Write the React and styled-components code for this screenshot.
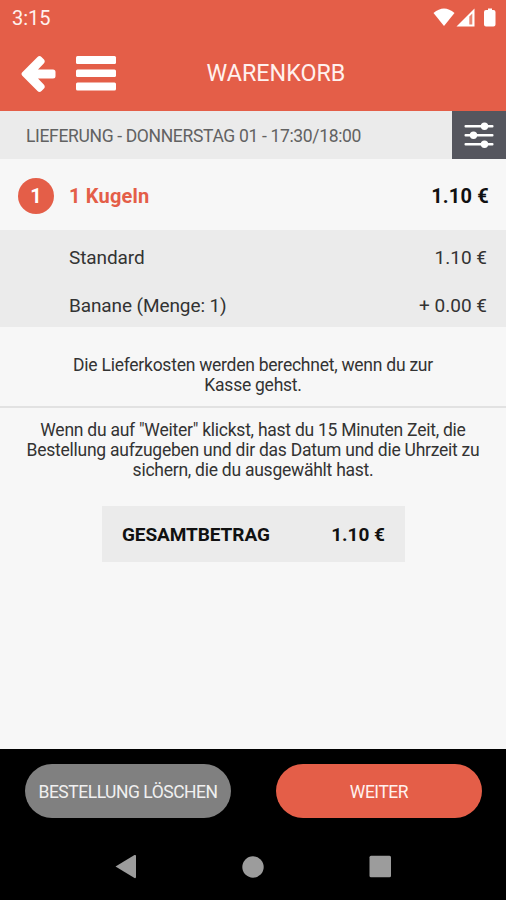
import React from "react";
import styled, { ThemeProvider, createGlobalStyle } from "styled-components";

const theme = {
  colorPrimary: "#e45e48",
  colorDark: "#55565e",
  background: "#f7f7f7",
  panel: "#ebebeb",
  textColor: "#333333",
  textStrong: "#111111",
};

const GlobalStyle = createGlobalStyle`
  body {
    margin: 0;
    font-family: Roboto, "Liberation Sans", sans-serif;
    color: ${({ theme }) => theme.textColor};
    background-color: #000;
  }
`;

const Screen = styled.div`
  width: 506px;
  height: 900px;
  display: flex;
  flex-direction: column;
  overflow: hidden;
  white-space: nowrap;
  background-color: ${({ theme }) => theme.background};
`;

const StatusBar = styled.div`
  height: 36px;
  flex: none;
  display: flex;
  align-items: center;
  justify-content: space-between;
  padding: 0 9px 0 12px;
  box-sizing: border-box;
  color: #fff;
  background-color: ${({ theme }) => theme.colorPrimary};
`;

const Clock = styled.span`
  font-size: 20px;
  color: #fff1ee;
`;

const Header = styled.header`
  height: 75px;
  flex: none;
  display: grid;
  grid-template-columns: 116px 1fr 70px;
  align-items: center;
  color: #fff;
  background-color: ${({ theme }) => theme.colorPrimary};
`;

const HeaderIcons = styled.div`
  display: flex;
  align-items: center;
  gap: 20px;
  padding-left: 21px;

  svg {
    flex: none;
  }
`;

const Title = styled.h1`
  margin: 0;
  padding-bottom: 1px;
  font-size: 23.3px;
  font-weight: 400;
  text-align: center;
  color: #fff1ee;
`;

const DeliveryBar = styled.div`
  height: 48px;
  flex: none;
  display: flex;
  align-items: stretch;
  justify-content: space-between;
  background-color: ${({ theme }) => theme.panel};
`;

const DeliverySlot = styled.span`
  align-self: center;
  padding: 2px 0 0 26px;
  font-size: 17.5px;
  letter-spacing: -0.34px;
  color: #626262;
`;

const FilterButton = styled.button`
  width: 54px;
  padding: 0;
  border: 0;
  display: flex;
  align-items: center;
  justify-content: center;
  background-color: ${({ theme }) => theme.colorDark};
`;

const ItemRow = styled.div`
  height: 71px;
  flex: none;
  display: flex;
  align-items: center;
  padding: 2px 17px 0 18px;
  box-sizing: border-box;
  font-size: 20px;
  font-weight: 700;
`;

const Quantity = styled.span`
  width: 36px;
  height: 36px;
  margin-right: 15px;
  border-radius: 50%;
  display: flex;
  align-items: center;
  justify-content: center;
  color: #fff;
  background-color: ${({ theme }) => theme.colorPrimary};
`;

const ItemName = styled.span`
  flex: 1;
  letter-spacing: 0.2px;
  color: ${({ theme }) => theme.colorPrimary};
`;

const Price = styled.span`
  letter-spacing: ${({ $spacing }) => $spacing || 0}px;
  color: ${({ $strong, theme }) => ($strong ? theme.textStrong : theme.textColor)};
`;

const Options = styled.div`
  height: 97px;
  flex: none;
  padding: 3px 19px 0 69px;
  box-sizing: border-box;
  background-color: ${({ theme }) => theme.panel};
`;

const OptionRow = styled.div`
  height: 48px;
  display: flex;
  align-items: center;
  justify-content: space-between;
  font-size: 19px;
  letter-spacing: -0.1px;
`;

const Note = styled.p`
  margin: 0;
  padding: ${({ $padding }) => $padding};
  flex: none;
  font-size: 17.5px;
  letter-spacing: -0.25px;
  line-height: 19.7px;
  text-align: center;
`;

const Divider = styled.hr`
  width: 100%;
  height: 2px;
  flex: none;
  margin: 0;
  border: 0;
  background-color: #e2e2e2;
`;

const Total = styled.div`
  width: 303px;
  height: 56px;
  flex: none;
  align-self: center;
  display: flex;
  align-items: center;
  justify-content: space-between;
  margin: 25px 0 0 1px;
  padding: 2px 20px 0;
  box-sizing: border-box;
  font-size: 19px;
  font-weight: 700;
  letter-spacing: -0.08px;
  color: ${({ theme }) => theme.textStrong};
  background-color: ${({ theme }) => theme.panel};
`;

const Footer = styled.footer`
  height: 151px;
  flex: none;
  margin-top: auto;
  background-color: #000;
`;

const Actions = styled.div`
  display: flex;
  justify-content: space-between;
  padding: 15px 24px 0 25px;
`;

const ActionButton = styled.button`
  width: 206px;
  height: 54px;
  padding: 1px 0 0;
  border: 0;
  border-radius: 27px;
  font-family: inherit;
  font-size: 17.5px;
  letter-spacing: -0.48px;
  color: ${({ $primary }) => ($primary ? "#fff1ee" : "#f0f0f0")};
  background-color: ${({ $primary, theme }) => ($primary ? theme.colorPrimary : "#808080")};
`;

const SystemNav = styled.nav`
  display: flex;
  align-items: center;
  justify-content: space-between;
  padding: 36px 114px 0 114px;

  svg {
    fill: #9c9c9c;
  }
`;

const StatusIcons = () => (
  <svg width="64" height="20" viewBox="0 0 64 20" fill="#fff">
    <path d="M0.500 5 Q11 -4 21.500 5 L11 18 Z" />
    <path d="M23.500 18.500 L41.500 0.500 V18.500 Z" />
    <path d="M36.300 8.500 L39.300 5.500 V16.500 H36.300 Z" fill="#e98573" />
    <path d="M53 2 H55 V0.500 H59 V2 H60.500 Q62.500 2 62.500 4 V16.500 Q62.500 18.500 60.500 18.500 H53 Q51 18.500 51 16.500 V4 Q51 2 53 2 Z" />
  </svg>
);

const BackIcon = () => (
  <svg width="35" height="38" viewBox="0 0 35 38" fill="#fff">
    <path d="M1.300 17.300 L16.500 2 Q18.500 0.200 20.500 2 L23 4.500 Q24.500 6.300 23 8.300 L17 14.500 H32 Q34.500 14.500 34.500 17 V21 Q34.500 23.500 32 23.500 H17 L23 29.700 Q24.500 31.700 23 33.500 L20.500 36 Q18.500 37.800 16.500 36 L1.300 20.700 Q-0.300 19 1.300 17.300 Z" />
  </svg>
);

const MenuIcon = () => (
  <svg width="41" height="36" viewBox="0 0 41 36" fill="#fff">
    <rect x="0" y="0" width="40" height="8" rx="1.500" />
    <rect x="0" y="13.500" width="40" height="7.500" rx="1.500" />
    <rect x="0" y="26.500" width="40" height="8" rx="1.500" />
  </svg>
);

const FilterIcon = () => (
  <svg width="30" height="28" viewBox="0 0 30 28" fill="#fff">
    <rect x="0.500" y="4" width="29" height="2.500" rx="1" />
    <rect x="0.500" y="13" width="29" height="2.500" rx="1" />
    <rect x="0.500" y="22" width="29" height="2.500" rx="1" />
    <circle cx="20.500" cy="5.200" r="3.700" />
    <circle cx="9.500" cy="14.200" r="3.700" />
    <circle cx="20.500" cy="23.200" r="3.700" />
  </svg>
);

const App = () => {
  return (
    <ThemeProvider theme={theme}>
      <GlobalStyle />
      <Screen>
        <StatusBar>
          <Clock>3:15</Clock>
          <StatusIcons />
        </StatusBar>
        <Header>
          <HeaderIcons>
            <BackIcon />
            <MenuIcon />
          </HeaderIcons>
          <Title>WARENKORB</Title>
        </Header>
        <DeliveryBar>
          <DeliverySlot>LIEFERUNG - DONNERSTAG 01 - 17:30/18:00</DeliverySlot>
          <FilterButton aria-label="Filter">
            <FilterIcon />
          </FilterButton>
        </DeliveryBar>
        <ItemRow>
          <Quantity>1</Quantity>
          <ItemName>1 Kugeln</ItemName>
          <Price $strong $spacing={0.2}>1.10 €</Price>
        </ItemRow>
        <Options>
          <OptionRow>
            <span>Standard</span>
            <Price>1.10 €</Price>
          </OptionRow>
          <OptionRow>
            <span>Banane (Menge: 1)</span>
            <Price>+ 0.00 €</Price>
          </OptionRow>
        </Options>
        <Note $padding="29px 0 11px">
          Die Lieferkosten werden berechnet, wenn du zur
          <br />
          Kasse gehst.
        </Note>
        <Divider />
        <Note $padding="13px 0 0">
          Wenn du auf "Weiter" klickst, hast du 15 Minuten Zeit, die
          <br />
          Bestellung aufzugeben und dir das Datum und die Uhrzeit zu
          <br />
          sichern, die du ausgewählt hast.
        </Note>
        <Total>
          <span>GESAMTBETRAG</span>
          <Price $strong>1.10 €</Price>
        </Total>
        <Footer>
          <Actions>
            <ActionButton>BESTELLUNG LÖSCHEN</ActionButton>
            <ActionButton $primary>WEITER</ActionButton>
          </Actions>
          <SystemNav>
            <svg width="23" height="25" viewBox="0 0 23 25">
              <path d="M1.500 12.500 L20.500 1 Q22 0.500 22 2 V23 Q22 24.500 20.500 24 Z" />
            </svg>
            <svg width="22" height="22" viewBox="0 0 22 22">
              <circle cx="11" cy="11" r="10.700" />
            </svg>
            <svg width="23" height="23" viewBox="0 0 23 23">
              <rect x="0.500" y="0.800" width="21.500" height="21.500" rx="1.500" />
            </svg>
          </SystemNav>
        </Footer>
      </Screen>
    </ThemeProvider>
  );
};

export default App;
